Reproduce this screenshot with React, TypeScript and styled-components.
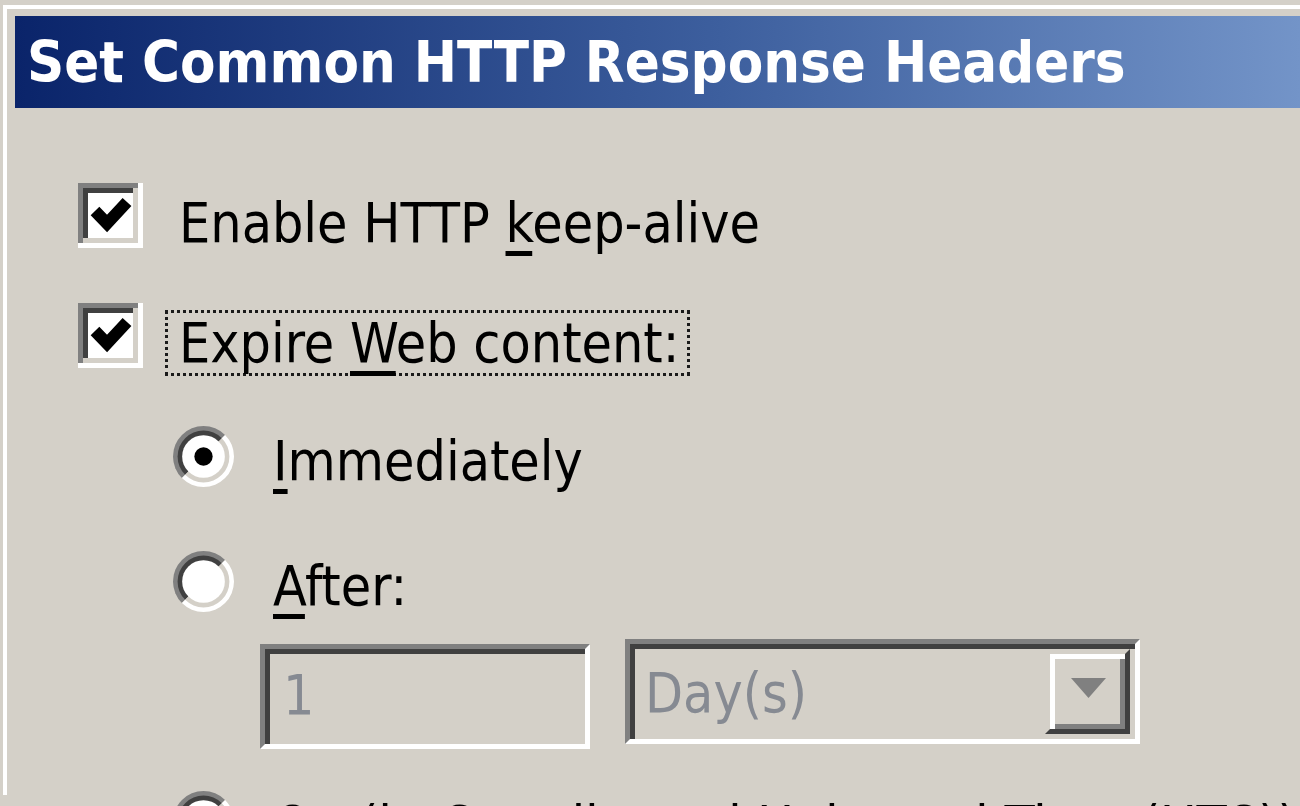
import styled, { createGlobalStyle } from 'styled-components';

const GlobalStyle = createGlobalStyle`
  html, body {
    margin: 0;
    padding: 0;
    width: 1300px;
    height: 806px;
    overflow: hidden;
    background: #d4d0c8;
  }
`;

const FONT = `"DejaVu Sans Condensed", "DejaVu Sans", sans-serif`;

const Checkbox = ({ checked }: { checked: boolean }) => (
  <Box viewBox="0 0 13 13">
    <rect x="0" y="0" width="13" height="13" fill="#fff" />
    <rect x="0" y="0" width="12" height="1" fill="#808080" />
    <rect x="0" y="0" width="1" height="12" fill="#808080" />
    <rect x="1" y="1" width="10" height="1" fill="#404040" />
    <rect x="1" y="1" width="1" height="10" fill="#404040" />
    <rect x="1" y="11" width="11" height="1" fill="#d4d0c8" />
    <rect x="11" y="1" width="1" height="11" fill="#d4d0c8" />
    <rect x="2" y="2" width="9" height="9" fill="#fff" />
    {checked && (
      <polyline
        points="3.4,5.6 5.8,8.1 9.8,3.8"
        fill="none"
        stroke="#000"
        strokeWidth="2.4"
        strokeLinejoin="miter"
      />
    )}
  </Box>
);

const half = (c: number, r: number, top: boolean) => {
  const d = r / Math.SQRT2;
  const bl = `${c - d},${c + d}`;
  const tr = `${c + d},${c - d}`;
  return top ? `M${bl} A${r} ${r} 0 0 1 ${tr} Z` : `M${tr} A${r} ${r} 0 0 1 ${bl} Z`;
};

const Radio = ({ checked }: { checked: boolean }) => (
  <RadioBox viewBox="0 0 12 12">
    <path d={half(6, 6, true)} fill="#808080" />
    <path d={half(6, 6, false)} fill="#fff" />
    <path d={half(6, 5.1, true)} fill="#404040" />
    <path d={half(6, 5.1, false)} fill="#d4d0c8" />
    <circle cx="6" cy="6" r="4.2" fill="#fff" />
    {checked && <circle cx="6" cy="6" r="1.8" fill="#000" />}
  </RadioBox>
);

export default function App() {
  return (
    <>
      <GlobalStyle />
      <Frame>
        <TitleBar>Set Common HTTP Response Headers</TitleBar>
        <Body>
          <CheckRow>
            <Checkbox checked />
            <Label>
              Enable HTTP <Key>k</Key>eep-alive
            </Label>
          </CheckRow>
          <CheckRow $gap={47}>
            <Checkbox checked />
            <Label $focused>
              Expire <Key>W</Key>eb content:
            </Label>
          </CheckRow>
          <Options>
            <OptionRow>
              <Radio checked />
              <Label>
                <Key>I</Key>mmediately
              </Label>
            </OptionRow>
            <OptionRow $gap={57}>
              <Radio checked={false} />
              <Label>
                <Key>A</Key>fter:
              </Label>
            </OptionRow>
            <Fields>
              <TextBox>1</TextBox>
              <Combo>
                <ComboText>Day(s)</ComboText>
                <ComboButton>
                  <svg width="40" height="25" viewBox="0 0 8 5">
                    <path d="M0.2 0.2 L7.2 0.2 L3.7 4.2 Z" fill="#808080" />
                  </svg>
                </ComboButton>
              </Combo>
            </Fields>
            <OptionRow $gap={42}>
              <Radio checked={false} />
              <Label>
                <Key>O</Key>n (in Coordinated Universal Time (UTC)):
              </Label>
            </OptionRow>
          </Options>
        </Body>
      </Frame>
    </>
  );
}

const Frame = styled.div`
  margin: 5px 0 0 3px;
  border-top: 4px solid #fff;
  border-left: 4px solid #fff;
  padding: 7px 0 0 8px;
  height: 790px;
  box-sizing: border-box;
`;

const TitleBar = styled.div`
  height: 92px;
  background: linear-gradient(to right, #0a246a 0%, #3d5f9e 55%, #7394c8 100%);
  color: #fff;
  font-family: ${FONT};
  font-stretch: condensed;
  font-weight: bold;
  font-size: 57.5px;
  line-height: 94px;
  padding-left: 12px;
  white-space: nowrap;
  overflow: hidden;
`;

const Body = styled.div`
  padding: 75px 0 0 63px;
  display: flex;
  flex-direction: column;
`;

const CheckRow = styled.div<{ $gap?: number }>`
  display: flex;
  align-items: flex-start;
  gap: 22px;
  margin-top: ${(p) => p.$gap ?? 0}px;
  white-space: nowrap;
`;

const Box = styled.svg`
  width: 65px;
  height: 65px;
  flex: none;
`;

const RadioBox = styled.svg`
  width: 61px;
  height: 61px;
  flex: none;
`;

const Label = styled.span<{ $focused?: boolean }>`
  font-family: ${FONT};
  font-stretch: condensed;
  font-size: 55px;
  line-height: 60px;
  color: #000;
  padding: 0 8px 0 11px;
  margin-top: 7px;
  border: 3px ${(p) => (p.$focused ? 'dotted #1a1a1a' : 'solid transparent')};
  white-space: nowrap;
`;

const Key = styled.span`
  text-decoration: underline;
  text-decoration-thickness: 5px;
  text-underline-offset: 9px;
`;

const Options = styled.div`
  display: flex;
  flex-direction: column;
  padding: 50px 0 0 95px;
`;

const OptionRow = styled(CheckRow)`
  gap: 25px;
  & > span {
    margin-top: 2px;
  }
`;

const Fields = styled.div`
  display: flex;
  align-items: flex-start;
  gap: 35px;
  margin: 20px 0 0 87px;
`;

const sunken = `
  box-sizing: border-box;
  border: 5px solid;
  border-color: #808080 #fff #fff #808080;
  box-shadow: inset 5px 5px 0 #404040, inset -5px -5px 0 #d4d0c8;
  background: #d4d0c8;
  font-family: ${FONT};
  font-stretch: condensed;
  font-size: 55px;
  color: #868a92;
`;

const TextBox = styled.div`
  ${sunken}
  width: 330px;
  height: 105px;
  margin-top: 5px;
  padding: 16px 0 0 18px;
  line-height: 60px;
`;

const Combo = styled.div`
  ${sunken}
  width: 515px;
  height: 105px;
  display: flex;
  align-items: stretch;
  padding: 5px;
`;

const ComboText = styled.div`
  flex: 1;
  padding: 14px 0 0 10px;
  line-height: 60px;
`;

const ComboButton = styled.div`
  width: 85px;
  box-sizing: border-box;
  border: 5px solid;
  border-color: #d4d0c8 #404040 #404040 #d4d0c8;
  box-shadow: inset 5px 5px 0 #fff, inset -5px -5px 0 #808080;
  background: #d4d0c8;
  display: flex;
  align-items: center;
  justify-content: center;
  padding: 0 0 4px 4px;
`;
